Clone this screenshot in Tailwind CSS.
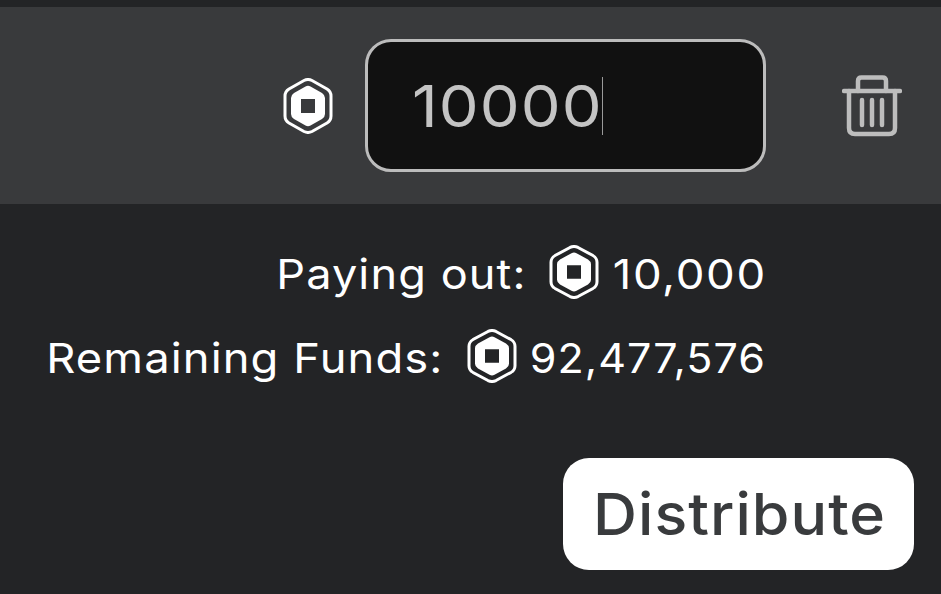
<!DOCTYPE html>
<html><head><meta charset="utf-8"><script src="https://cdn.jsdelivr.net/npm/@tailwindcss/browser@4"></script></head>
<body class="m-0 h-[594px] w-[941px] overflow-hidden bg-[#232426] font-['Inter','Liberation_Sans',sans-serif]">
<div class="h-[7px] bg-[#232426]"></div>
<div class="flex h-[197px] items-center bg-[#393a3c]">
  <svg class="ml-[283px] h-[56px] w-[50px]" viewBox="0 0 50 56"><path d="M21 2.5 Q25 .5 29 2.5 L44 11 Q48 13.5 48 18 V38 Q48 42.5 44 45 L29 53.5 Q25 55.5 21 53.5 L6 45 Q2 42.5 2 38 V18 Q2 13.5 6 11 Z" fill="none" stroke="#fff" stroke-width="3"/><path fill-rule="evenodd" d="M22.5 8.5 Q25 7 27.5 8.5 L39 15 Q42 17 42 20 V36 Q42 39 39 41 L27.5 47.5 Q25 49 22.5 47.5 L11 41 Q8 39 8 36 V20 Q8 17 11 15 Z M18 21 V35 H32 V21 Z" fill="#fff"/></svg>
  <div class="ml-[32px] flex h-[133px] w-[401px] items-center rounded-[26px] border-[3px] border-[#bcbcbc] bg-[#111111] pl-[44px]">
    <span class="origin-left scale-x-[1.09] text-[58px] leading-none font-normal tracking-[1px] text-[#c4c4c4]">10000</span><span class="ml-[15px] h-[58px] w-px bg-[#9a9a9a]"></span>
  </div>
  <svg class="ml-[76px] h-[62px] w-[60px]" viewBox="0 0 60 62"><g fill="none" stroke="#bdbdbd" stroke-linecap="round" stroke-linejoin="round" stroke-width="4.5"><path d="M2 16 H58"/><path d="M16 16 V6 Q16 2.500 19.500 2.500 H40.500 Q44 2.500 44 6 V16"/><path d="M7 16 V53 Q7 59 13 59 H47 Q53 59 53 53 V16"/><path d="M20 25 V50 M30 25 V50 M40 25 V50"/></g></svg>
</div>
<div class="flex flex-col items-end pr-[175px] pt-[41px] text-[41px] leading-[54px] text-white">
  <div class="flex h-[54px] items-center"><span class="mt-[3px] origin-right scale-x-[1.1] tracking-[1px]">Paying out:</span>
    <svg class="ml-[23px] mr-[29px] h-[54px] w-[50px]" viewBox="0 0 50 56" preserveAspectRatio="none"><path d="M21 2.5 Q25 .5 29 2.5 L44 11 Q48 13.5 48 18 V38 Q48 42.5 44 45 L29 53.5 Q25 55.5 21 53.5 L6 45 Q2 42.5 2 38 V18 Q2 13.5 6 11 Z" fill="none" stroke="#fff" stroke-width="3"/><path fill-rule="evenodd" d="M22.5 8.5 Q25 7 27.5 8.5 L39 15 Q42 17 42 20 V36 Q42 39 39 41 L27.5 47.5 Q25 49 22.5 47.5 L11 41 Q8 39 8 36 V20 Q8 17 11 15 Z M18 21 V35 H32 V21 Z" fill="#fff"/></svg>
    <span class="mr-[-1px] mt-[3px] origin-right scale-x-[1.11] tracking-[1.5px]">10,000</span></div>
  <div class="mt-[30px] flex h-[54px] items-center"><span class="mt-[3px] origin-right scale-x-[1.105] tracking-[1px]">Remaining Funds:</span>
    <svg class="ml-[24px] mr-[24px] h-[54px] w-[50px]" viewBox="0 0 50 56" preserveAspectRatio="none"><path d="M21 2.5 Q25 .5 29 2.5 L44 11 Q48 13.5 48 18 V38 Q48 42.5 44 45 L29 53.5 Q25 55.5 21 53.5 L6 45 Q2 42.5 2 38 V18 Q2 13.5 6 11 Z" fill="none" stroke="#fff" stroke-width="3"/><path fill-rule="evenodd" d="M22.5 8.5 Q25 7 27.5 8.5 L39 15 Q42 17 42 20 V36 Q42 39 39 41 L27.5 47.5 Q25 49 22.5 47.5 L11 41 Q8 39 8 36 V20 Q8 17 11 15 Z M18 21 V35 H32 V21 Z" fill="#fff"/></svg>
    <span class="mt-[3px] origin-right scale-x-[1.05] tracking-[1px]">92,477,576</span></div>
</div>
<div class="flex justify-end pr-[27px] pt-[75px]">
  <button class="flex h-[112px] w-[351px] items-center justify-center rounded-[26px] bg-white pl-[2px] text-[58px] font-medium text-[#393b3d]"><span class="scale-x-[1.05] tracking-[1px]">Distribute</span></button>
</div>
</body></html>
